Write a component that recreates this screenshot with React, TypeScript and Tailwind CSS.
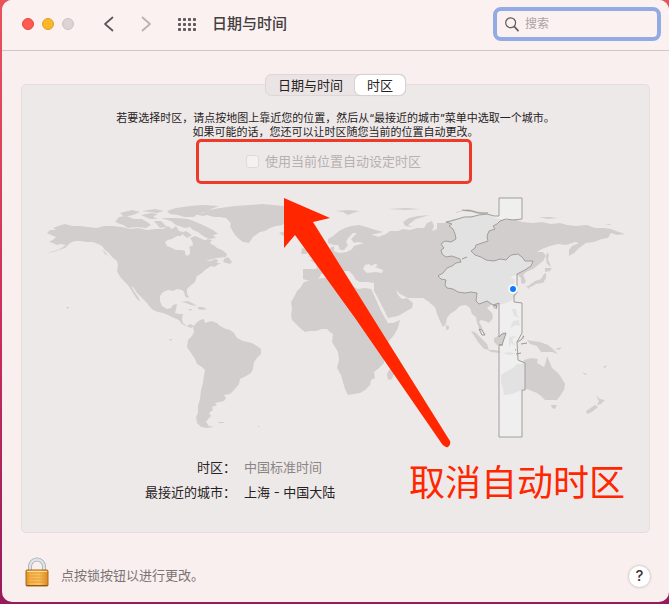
import React from "react";

const cjk =
  "font-['Inter','Noto_Sans_CJK_SC',sans-serif]";

const LAND = [
  // North and Central America
  "M47 233L50 230L56 230L53 228L58 226L65 224L72 226L80 226L88 227L97 228L104 226L113 226L122 227L130 229L138 228L147 230L155 229L163 229L168 226L172 229L176 226L179 231L183 232L181 236L177 236L172 239L168 240L165 242L167 246L172 248L176 250L182 250L185 251L185 254L187 256L190 254L190 250L189 247L193 245L192 241L190 238L195 236L200 238L204 240L208 240L211 244L215 246L217 248L222 250L227 254L226 257L217 258L213 259L206 261L211 261L215 259L218 260L217 263L221 263L214 267L211 266L205 270L202 273L197 276L195 282L190 286L187 289L187 294L189 297L187 298L185 296L184 292L182 290L177 289L173 291L168 290L163 292L160 296L160 301L162 306L167 309L171 308L173 305L177 304L176 309L175 313L179 314L183 314L182 319L183 323L187 326L190 324L194 326L191 328L186 326L182 324L179 320L174 318L168 315L163 313L158 312L153 310L149 306L147 303L141 297L137 293L134 288L131 286L134 291L138 297L141 302L137 299L133 293L130 288L127 284L122 279L119 275L117 271L118 266L117 261L112 257L109 253L105 250L102 246L98 244L93 242L87 242L80 241L75 241L70 243L65 248L59 250L53 252L46 253L54 251L60 249L66 245L61 244L57 245L53 243L49 242L54 239L56 237L51 235Z",
  // Greenland
  "M193 214L203 213L209 210L220 208L235 206L250 205L262 204L273 205L284 206L290 211L284 215L285 221L283 225L276 226L270 228L265 231L260 232L253 237L249 243L243 242L239 239L235 235L232 230L230 226L231 224L229 221L226 218L220 217L214 217L207 215L203 216Z",
  // Arctic archipelago
  "M167 211L176 208L190 206L203 205L219 206L211 209L205 212L197 214L194 217L184 217L178 215L170 214Z",
  "M119 217L126 216L134 219L142 219L147 222L151 225L146 228L137 227L128 228L123 225L115 222Z",
  "M120 213L132 210L140 212L133 215L124 217Z",
  "M141 215L151 213L158 214L153 217L158 219L150 219Z",
  "M142 211L155 209L164 211L157 213Z",
  "M161 218L176 218L188 219L196 222L205 226L213 230L218 234L213 235L216 238L209 239L203 236L198 232L193 230L190 227L185 228L176 225L171 221Z",
  "M154 221L161 221L167 227L160 228Z",
  "M181 233L186 231L192 235L187 238Z",
  "M207 239L212 240L210 243L205 242Z",
  "M224 259L228 257L232 262L230 264L223 262Z",
  // Caribbean and Pacific specks
  "M181 302L188 301L194 304L197 306L191 305L186 303Z",
  "M198 307L203 307L207 309L202 310L198 309Z",
  "M188 309L192 309L191 311Z",
  "M66 307L69 307L68 309Z",
  "M169 339L172 339L171 341Z",
  "M102 250L105 252L108 256L105 254Z",
  // South America
  "M193 327L196 323L200 320L204 319L205 323L211 321L217 323L220 326L226 329L230 330L234 333L237 338L243 341L252 343L257 346L261 349L261 354L257 358L254 362L253 369L251 373L246 376L240 379L239 384L235 389L230 394L224 395L226 398L224 401L215 403L217 405L212 407L213 410L209 413L211 416L208 419L206 422L209 426L214 427L207 428L201 427L197 423L196 417L198 413L198 406L200 399L201 390L203 383L204 375L205 370L202 367L197 364L195 359L191 353L187 347L188 340L192 336L194 332Z",
  "M218 422L225 422L223 423L219 423Z",
  "M257 426L260 426L259 427Z",
  // Africa
  "M303 283L307 281L315 279L324 278L332 277L332 281L336 282L341 286L346 284L352 286L358 289L365 288L371 289L373 293L377 302L381 311L385 318L388 323L393 323L400 320L398 328L394 335L388 342L384 349L384 357L384 363L379 368L374 372L375 378L371 380L370 385L365 390L360 393L354 394L348 395L345 389L343 382L341 375L337 368L339 360L338 352L335 347L332 342L333 334L330 332L327 329L322 329L316 331L310 331L305 332L300 328L296 324L292 320L291 315L292 309L291 302L294 297L297 291L301 287Z",
  "M397 363L395 371L392 379L388 380L387 374L389 370Z",
  // Europe and Asia
  "M303 269L310 269L317 269L316 264L310 260L317 258L322 255L328 252L330 248L334 246L334 251L339 253L347 252L352 249L354 246L364 243L358 242L354 243L351 239L357 233L353 233L348 238L346 242L348 245L344 250L340 250L338 245L334 245L328 243L328 239L333 236L339 231L345 228L351 226L359 225L366 227L376 230L383 232L375 234L371 234L378 237L386 234L390 231L398 231L403 229L410 230L417 228L424 228L427 223L432 221L434 226L432 231L437 229L437 223L444 223L451 220L463 217L477 216L488 214L495 218L506 220L514 219L522 222L533 223L542 222L551 224L560 223L567 225L576 226L587 225L595 228L604 228L611 229L619 232L625 234L617 235L611 233L608 238L602 239L594 242L586 243L579 248L574 253L569 256L569 250L572 246L579 243L575 242L566 245L558 244L550 246L542 249L537 252L543 252L546 256L543 261L538 265L533 269L526 272L523 275L526 281L524 284L521 283L521 278L518 275L513 276L510 278L515 279L514 283L517 289L516 295L511 301L504 304L496 305L491 305L487 308L492 313L493 318L489 323L485 321L481 320L479 322L482 327L483 331L479 328L477 323L476 317L472 314L470 308L466 305L460 306L456 310L450 314L447 318L446 324L443 327L440 321L437 314L435 307L431 304L429 302L423 298L413 298L408 298L404 296L400 294L396 290L398 295L402 299L407 298L413 303L412 308L405 312L398 316L388 318L383 308L378 298L374 291L374 283L368 282L360 282L356 280L353 275L349 271L343 271L345 275L342 279L338 273L332 270L326 272L321 274L319 278L313 281L306 280L303 279L303 273Z",
  // British Isles, Iceland, Svalbard, Novaya Zemlya
  "M309 241L313 240L313 245L319 253L316 256L308 257L312 253L309 250L312 248Z",
  "M302 248L307 249L307 254L301 254Z",
  "M279 233L286 231L291 234L285 237Z",
  "M335 211L348 210L360 211L353 213L348 215L343 212Z",
  "M403 222L409 218L418 216L430 215L416 219L408 225L413 227L405 226Z",
  "M388 209L405 208L421 209L407 210Z",
  "M456 212L468 209L481 212L490 213L480 214L471 212L463 211L456 213Z",
  "M539 217L550 217L558 218L548 219Z",
  "M605 224L611 224L609 225Z",
  // Japan, Sakhalin, Taiwan, Philippines
  "M547 252L549 255L548 259L551 267L547 264L546 258Z",
  "M545 268L552 268L550 271L545 272Z",
  "M546 273L546 278L543 283L536 284L531 287L528 286L535 281L541 279L544 274Z",
  "M526 286L530 286L529 289Z",
  "M512 309L516 309L517 315L520 318L514 316Z",
  "M513 321L519 320L520 326L516 325L510 328Z",
  "M493 306L497 305L497 308L494 309Z",
  "M446 325L449 326L449 329L446 330Z",
  // Indonesia and New Guinea
  "M471 331L475 332L481 338L487 344L489 350L484 349L478 342Z",
  "M488 350L495 350L502 352L499 353L491 352Z",
  "M494 338L498 336L503 332L507 333L505 338L502 345L497 345L494 342Z",
  "M509 337L517 336L512 339L515 346L511 343L509 348Z",
  "M503 353L510 352L516 354L509 355Z",
  "M522 336L524 335L524 340Z",
  "M527 340L533 341L540 342L548 345L554 350L558 354L552 352L546 352L541 352L537 346L530 344Z",
  "M555 349L562 347L559 350Z",
  // Australia and New Zealand
  "M501 375L507 371L513 368L517 364L522 364L524 360L531 358L538 359L537 363L544 367L546 361L547 356L550 363L552 368L557 372L561 377L565 384L564 390L560 396L557 400L551 400L545 400L541 396L537 393L532 391L527 389L519 391L512 394L504 395L503 389L501 382Z",
  "M551 405L557 405L555 409L552 408Z",
  "M596 395L600 399L605 400L601 404L597 405L599 401Z",
  "M595 405L598 407L592 412L587 414L586 411Z",
  "M582 372L587 374L585 375Z",
  "M603 367L607 365L605 368Z",
];

const ZONE =
  "M499 198L522 198L522 219L513 220L506 219L500 221L497 224L493 226L495 229L489 231L487 236L488 241L482 243L476 245L475 248L471 251L475 255L481 257L486 260L494 261L500 259L506 260L511 255L518 254L522 257L525 261L533 261L531 266L525 270L517 274L517 293L514 295L514 302L522 303L522 333L517 342L518 360L525 363L525 390L522 390L522 437L499 437L499 345L502 345L506 333L502 334L499 337L499 303L493 305L487 301L482 303L479 304L476 301L477 293L471 292L465 293L458 292L453 289L447 288L445 285L446 280L441 279L438 276L443 273L447 268L452 266L456 263L461 262L460 259L452 256L446 257L442 254L441 250L444 248L441 244L445 241L451 242L456 239L455 234L453 229L449 226L452 224L446 222L451 221L458 219L464 217L471 217L479 215L487 214L494 216L499 216Z";

function WorldMap() {
  return (
    <svg
      viewBox="22 190 627 260"
      className="mt-1.5 block w-full"
      role="img"
      aria-label="时区地图"
    >
      <g fill="#d3cece">
        {LAND.map((d) => (
          <path key={d} d={d} />
        ))}
      </g>
      <path
        d="M363 269L365 265L369 264L371 266L375 264L378 265L375 267L383 270L382 273L375 272L367 273Z"
        fill="#eee9e9"
      />
      <path d={ZONE} fill="#f2f5f5" fillOpacity="0.5" stroke="#a19d9d" strokeWidth="1" />
      <g fill="none" stroke="#9b9797" strokeWidth="1">
        <path d="M462 259L467 257M479 329L482 330L485 335L482 335Z" />
        <path d="M493 306L497 305L496 309M499 345L503 345M517 342L521 340L524 336M521 344L527 343M516 354L521 353" />
        <path d="M462 210L472 211L478 213L488 213" />
      </g>
      <path d="M515 350h1" stroke="#888" />
      <circle cx="513" cy="289" r="5" fill="#fff" stroke="#ddd" strokeWidth="0.5" />
      <circle cx="513" cy="289" r="3" fill="#0a7cff" />
      <path
        d="M284 198L330 218L313 222L373 318L450 441Q451 445 448 447Q445 448 442 444L355 318L295 235L284 248Z"
        fill="#ff2600"
      />
    </svg>
  );
}

function Lock() {
  return (
    <svg width="24" height="30" viewBox="0 0 24 30" aria-hidden="true">
      <defs>
        <linearGradient id="brass" x1="0" y1="0" x2="1" y2="0">
          <stop offset="0" stopColor="#d98b22" />
          <stop offset=".2" stopColor="#f9b548" />
          <stop offset=".6" stopColor="#fcc362" />
          <stop offset="1" stopColor="#d8861d" />
        </linearGradient>
      </defs>
      <path d="M5 15V9.500a7 7 0 0 1 14 0V15" fill="none" stroke="#a3a7ad" strokeWidth="4" />
      <path d="M5 15V9.500a7 7 0 0 1 14 0V15" fill="none" stroke="#dfe4ea" strokeWidth="2.500" />
      <rect x="1" y="13" width="22" height="16" rx="1" fill="url(#brass)" stroke="#ad6c18" />
      <path d="M2 16h20M2 19h20M2 22h20M2 25h20" stroke="#e09a35" />
      <path d="M2 14.500h20" stroke="#ffdd94" />
      <path d="M1 28.500h22" stroke="#8e5a18" />
    </svg>
  );
}

export default function App() {
  return (
    <div
      className={`flex min-h-screen bg-linear-to-b from-[#e8545c] via-[#cf2f5c] to-[#951b5c] pb-0.5 pl-0.5 text-[13px] text-[#262223] ${cjk}`}
    >
      <main className="flex flex-1 flex-col overflow-hidden rounded-[10px] bg-[#f8efee]">
        <header className="flex h-[51px] items-center border-b border-[#d0c6c6] bg-[#faf1f0] pr-2 pb-0.5 pl-5">
          <div className="flex gap-2">
            <button aria-label="关闭" className="size-3 rounded-full border border-[#e2463f] bg-[#ff5a52]" />
            <button aria-label="最小化" className="size-3 rounded-full border border-[#dfa023] bg-[#f9b82c]" />
            <button aria-label="缩放" disabled className="size-3 rounded-full border border-[#cbc3c3] bg-[#dcd4d4]" />
          </div>
          <button aria-label="后退" className="ml-7">
            <svg width="14" height="16" viewBox="0 0 14 16" fill="none" stroke="#5c5556" strokeWidth="1.700" strokeLinecap="round" strokeLinejoin="round">
              <path d="M10.500 1.500L3 8l7.500 6.500" />
            </svg>
          </button>
          <button aria-label="前进" disabled className="ml-6">
            <svg width="14" height="16" viewBox="0 0 14 16" fill="none" stroke="#b9b0b0" strokeWidth="1.700" strokeLinecap="round" strokeLinejoin="round">
              <path d="M2.500 1.500L10 8l-7.500 6.500" />
            </svg>
          </button>
          <button aria-label="显示全部" className="ml-6">
            <svg width="18" height="13" viewBox="0 0 18 13" fill="#625b5c">
              {[0, 5, 10].map((y) =>
                [0, 5, 10, 15].map((x) => (
                  <rect key={`${x}-${y}`} x={x} y={y} width="3" height="3" rx="0.800" />
                )),
              )}
            </svg>
          </button>
          <h1 className="ml-4 text-[15px] leading-5 font-medium text-[#443e3f]">日期与时间</h1>
          <label className="ml-auto flex h-[34px] w-[168px] items-center gap-1.5 rounded-[8px] border-4 border-[#92abe5] pl-2">
            <svg width="16" height="17" viewBox="0 0 16 17" fill="none" stroke="#635c5d" strokeLinecap="round" aria-hidden="true">
              <circle cx="6.500" cy="6.500" r="5.700" strokeWidth="1.400" />
              <path d="M10.800 11L15 15.500" strokeWidth="1.900" />
            </svg>
            <input
              type="search"
              aria-label="搜索"
              placeholder="搜索"
              className="w-full min-w-0 bg-transparent text-xs outline-none placeholder:text-[#ada3a3]"
            />
          </label>
        </header>

        <div className="flex flex-col px-[19px] pt-[23px]">
          <div
            role="tablist"
            className="z-10 -mb-3 flex h-[22px] self-center rounded-md border border-[#dfd7d7] bg-[#ebe4e4]"
          >
            <button role="tab" aria-selected="false" className="px-3 leading-5">
              日期与时间
            </button>
            <button
              role="tab"
              aria-selected="true"
              className="rounded-md bg-white px-3 leading-5 shadow-[0_0_1px_1px_#d8d0d0]"
            >
              时区
            </button>
          </div>

          <section className="rounded-[5px] border border-[#e5dddd] bg-[#eee9e9] pt-[26px] pb-[21px]">
            <p className="text-center text-[11px] leading-[14px]">
              若要选择时区，请点按地图上靠近您的位置，然后从“最接近的城市”菜单中选取一个城市。
              <br />
              如果可能的话，您还可以让时区随您当前的位置自动更改。
            </p>
            <div className="mr-1 flex justify-center">
              <label className="flex h-[45px] w-[276px] items-center justify-center gap-1.5 rounded-[5px] border-[3px] border-[#ee3a29] text-[#b7b0b0]">
                <input
                  type="checkbox"
                  disabled
                  className="size-[13px] appearance-none rounded-[3px] border border-[#e0d9d9] bg-[#f6f1f1]"
                />
                使用当前位置自动设定时区
              </label>
            </div>
            <WorldMap />
            <div className="flex items-start justify-between pt-[5px] pr-6">
              <dl className="grid grid-cols-[214px_auto] gap-x-2 leading-[25px]">
                <dt className="text-right">时区：</dt>
                <dd className="text-[#8b8485]">中国标准时间</dd>
                <dt className="text-right">最接近的城市：</dt>
                <dd>上海 - 中国大陆</dd>
              </dl>
              <strong className="text-[36px] leading-[56px] font-normal text-[#ff2600]">取消自动时区</strong>
            </div>
          </section>
        </div>

        <footer className="flex items-end px-[19px] pt-6">
          <button aria-label="锁" className="ml-1">
            <Lock />
          </button>
          <p className="ml-3 leading-6 text-[#7b7374]">点按锁按钮以进行更改。</p>
          <button
            aria-label="帮助"
            className="ml-auto flex size-[21px] items-center justify-center rounded-full bg-white text-[15px] font-medium text-[#3a3536] shadow-[0_0_2px_1px_#d8d0d0]"
          >
            ?
          </button>
        </footer>
      </main>
    </div>
  );
}
